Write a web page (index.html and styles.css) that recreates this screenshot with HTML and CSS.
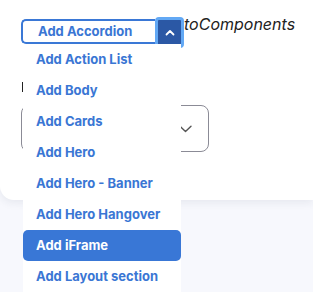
FILE: index.html
```html
<!DOCTYPE html>
<html lang="en">
<head>
    <meta charset="UTF-8">
    <meta name="viewport" content="width=device-width, initial-scale=1.0">
    <title>Add to Components</title>
    <link rel="stylesheet" href="styles.css">
</head>
<body>
    <div class="card">
        <div class="toolbar">
            <div class="trigger">Add Accordion</div>
            <button class="toggle" type="button">
                <svg width="10" height="7" viewBox="0 0 10 7"><path d="M1.5 5.5 L5 2 L8.5 5.5" fill="none" stroke="#fff" stroke-width="1.8" stroke-linecap="round" stroke-linejoin="round"/></svg>
            </button>
            <span class="caption">toComponents</span>
        </div>
        <div class="mark"></div>
        <div class="select">
            <svg width="13" height="8" viewBox="0 0 13 8"><path d="M1 1.2 L6.5 6.5 L12 1.2" fill="none" stroke="#555" stroke-width="1.4" stroke-linecap="round" stroke-linejoin="round"/></svg>
        </div>

        <ul class="menu">
            <li>Add Action List</li>
            <li>Add Body</li>
            <li>Add Cards</li>
            <li>Add Hero</li>
            <li>Add Hero - Banner</li>
            <li>Add Hero Hangover</li>
            <li class="active">Add iFrame</li>
            <li>Add Layout section</li>
        </ul>
    </div>
</body>
</html>
```

FILE: styles.css
```css
body {
    margin: 0;
    min-height: 292px;
    background-color: #f7f8fd;
    font-family: Inter, "Liberation Sans", sans-serif;
}
.card {
    position: relative;
    height: 200px;
    box-sizing: border-box;
    padding: 17px 0 0 21px;
    background-color: #fff;
    border-radius: 0 0 0 14px;
    box-shadow: 0 3px 8px rgba(40, 50, 80, 0.08);
}
.toolbar {
    display: flex;
    align-items: flex-start;
}
.trigger {
    width: 134px;
    height: 25px;
    margin-top: 2px;
    box-sizing: border-box;
    padding-left: 15px;
    border: 2px solid #3a78d6;
    border-right: none;
    border-radius: 5px 0 0 5px;
    color: #3a76d4;
    font-size: 13px;
    font-weight: 700;
    line-height: 21px;
}
.toggle {
    width: 29px;
    height: 31px;
    box-sizing: border-box;
    padding: 0;
    display: flex;
    align-items: center;
    justify-content: center;
    background-color: #2b58a5;
    border: 3px solid #62a8f4;
    border-radius: 4px;
}
.caption {
    margin-top: -3px;
    color: #222;
    font-size: 16px;
    font-style: italic;
    line-height: 20px;
    white-space: nowrap;
}
.mark {
    width: 1.5px;
    height: 10px;
    margin: 34px 0 0 1px;
    background-color: #222;
}
.select {
    width: 188px;
    height: 47px;
    margin-top: 13px;
    box-sizing: border-box;
    padding-right: 16px;
    display: flex;
    align-items: center;
    justify-content: flex-end;
    border: 1px solid #8b8b96;
    border-radius: 8px;
}
.menu {
    position: absolute;
    left: 23px;
    top: 44px;
    width: 158px;
    margin: 0;
    padding: 0;
    list-style: none;
    background-color: #fff;
}
.menu li {
    height: 31px;
    padding-left: 13px;
    color: #3a76d4;
    font-size: 13px;
    font-weight: 700;
    line-height: 31px;
    border-radius: 5px;
}
.menu li.active {
    background-color: #3977d6;
    color: #fff;
}
```
